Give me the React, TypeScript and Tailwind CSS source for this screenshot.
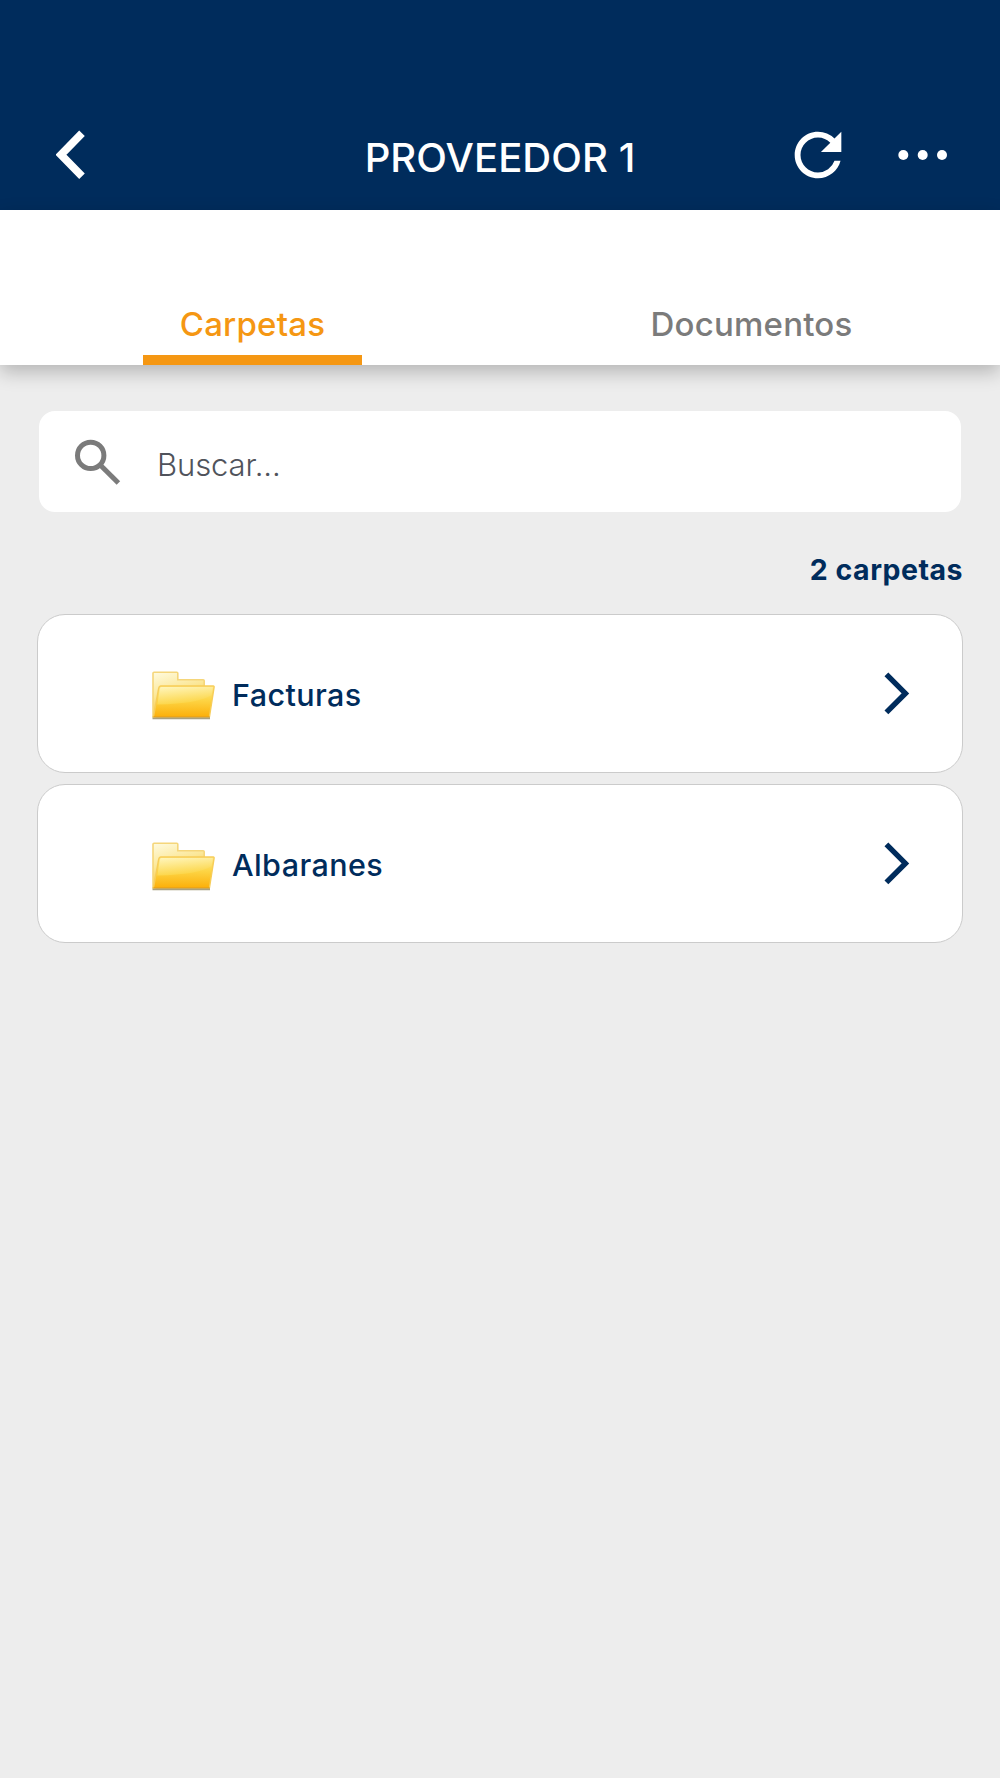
interface Folder {
  id: number
  name: string
}

interface TabProps {
  label: string
  active?: boolean
}

const FOLDERS: Folder[] = [
  { id: 1, name: 'Facturas' },
  { id: 2, name: 'Albaranes' },
]

function BackIcon() {
  return (
    <svg width="30" height="50" viewBox="0 0 30 50" fill="none">
      <path d="M26 3.3 5 24.8l21 21.4" stroke="#fff" strokeWidth="7.8" />
    </svg>
  )
}

function RefreshIcon() {
  return (
    <svg width="70" height="70" viewBox="0 0 24 24" fill="#fff">
      <path d="M17.65 6.35A7.958 7.958 0 0 0 12 4c-4.42 0-7.99 3.58-7.99 8s3.57 8 7.99 8c3.73 0 6.84-2.55 7.73-6h-2.08A5.99 5.99 0 0 1 12 18c-3.31 0-6-2.69-6-6s2.69-6 6-6c1.66 0 3.14.69 4.22 1.78L13 11h7V4l-2.35 2.35z" />
    </svg>
  )
}

function MoreIcon() {
  return (
    <svg width="50" height="12" viewBox="0 0 50 12" fill="#fff">
      <circle cx="5.3" cy="6" r="5" />
      <circle cx="24.7" cy="6" r="5" />
      <circle cx="44" cy="6" r="5" />
    </svg>
  )
}

function SearchIcon() {
  return (
    <svg width="46" height="46" viewBox="0 0 46 46" fill="none" stroke="#7b7b7b" strokeWidth="5">
      <circle cx="15.7" cy="16.4" r="13.2" />
      <path d="m25 25.8 18.4 18.2" />
    </svg>
  )
}

function ChevronIcon() {
  return (
    <svg width="26" height="44" viewBox="0 0 26 44" fill="none">
      <path d="m2.4 2.4 19 19-19 19" stroke="#002c5c" strokeWidth="5.4" />
    </svg>
  )
}

function FolderIcon() {
  return (
    <svg width="64" height="50" viewBox="0 0 64 50">
      <defs>
        <linearGradient id="back" x1="0" y1="0" x2="0.35" y2="1">
          <stop offset="0" stopColor="#fffbe0" />
          <stop offset="0.5" stopColor="#fbe797" />
          <stop offset="1" stopColor="#f6bc2b" />
        </linearGradient>
        <linearGradient id="front" x1="0" y1="0" x2="0" y2="1">
          <stop offset="0" stopColor="#fdea8d" />
          <stop offset="0.45" stopColor="#fdd546" />
          <stop offset="1" stopColor="#fcb00a" />
        </linearGradient>
        <linearGradient id="gloss" x1="0" y1="0" x2="0.3" y2="1">
          <stop offset="0" stopColor="#fff6bd" />
          <stop offset="1" stopColor="#fcd545" />
        </linearGradient>
      </defs>
      <path d="M1.5 45H59v3.2H1.5z" fill="#8d8053" opacity="0.75" />
      <path
        d="M2 2.2q0-1 1-1h22.8q1 0 1 1v6.6h25.4q1 0 1 1V40L2 45.5z"
        fill="url(#back)"
        stroke="#f5d67a"
        strokeWidth="1.6"
      />
      <path d="M7.7 17.2q.4-2.2 2-2.2h52.6q1 0 .8 1.2l-4.6 29.4h-56z" fill="url(#front)" stroke="#f7cd58" strokeWidth="1.4" />
      <path d="M8.9 17.8q.3-1.8 1.6-1.8h51.2l-1.2 8q-12 8.5-54.2 9.6z" fill="url(#gloss)" />
      <path d="M2.5 45.6h56" stroke="#eda516" strokeWidth="1.2" />
    </svg>
  )
}

function Tab({ label, active = false }: TabProps) {
  return (
    <button
      className={
        active
          ? 'flex h-[69px] w-[219px] flex-col items-center justify-between font-medium text-[#f59713]'
          : 'flex h-[69px] w-[219px] flex-col items-center justify-between font-medium text-[#7b7b7b]'
      }
    >
      <span className="pt-2 text-[33px] leading-[40px] tracking-[0.2px] whitespace-nowrap">{label}</span>
      {active && <span className="h-[10px] w-full bg-[#f59713]" />}
    </button>
  )
}

function FolderRow({ name }: { name: string }) {
  return (
    <li className="flex h-[159px] items-center rounded-[28px] border border-[#cbcbcb] bg-white pr-[52px] pl-[113px]">
      <div className="pt-[5.6px]">
        <FolderIcon />
      </div>
      <span className="flex-1 pt-[2.5px] pl-[17px] text-[30.5px] leading-[46px] font-medium tracking-[0.4px] text-[#002c5c]">
        {name}
      </span>
      <ChevronIcon />
    </li>
  )
}

export default function App() {
  return (
    <div className="flex h-[1778px] w-[1000px] flex-col bg-[#ededed] font-['Inter',sans-serif]">
      <header className="grid h-[210px] grid-cols-3 items-end bg-[#002c5c] pb-[19px]">
        <div className="flex h-[72px] items-center pl-14">
          <BackIcon />
        </div>
        <h1 className="flex h-[72px] items-center justify-center pt-[5px] text-[40px] font-medium tracking-[0.05px] whitespace-nowrap text-white">
          PROVEEDOR 1
        </h1>
        <div className="flex h-[72px] items-center justify-end gap-[45px] pr-[52px]">
          <RefreshIcon />
          <MoreIcon />
        </div>
      </header>

      <nav className="relative flex h-[155px] items-end bg-white pr-[139px] pl-[143px] shadow-[0_7px_18px_rgba(0,0,0,0.24)]">
        <div className="flex w-full justify-between">
          <Tab label="Carpetas" active />
          <Tab label="Documentos" />
        </div>
      </nav>

      <main className="flex flex-col px-[37px] pt-[46px]">
        <label className="mx-0.5 flex h-[101px] items-center rounded-[16px] bg-white pl-9">
          <SearchIcon />
          <span className="pt-2 pl-9 text-[31px] font-light tracking-[-0.1px] text-[#50535b]">Buscar...</span>
        </label>

        <p className="mt-[38px] text-right text-[28.5px] leading-[40px] font-bold tracking-[0.5px] text-[#002c5c]">
          2 carpetas
        </p>

        <ul className="mt-6 flex flex-col gap-[11.4px]">
          {FOLDERS.map((folder) => (
            <FolderRow key={folder.id} name={folder.name} />
          ))}
        </ul>
      </main>
    </div>
  )
}
